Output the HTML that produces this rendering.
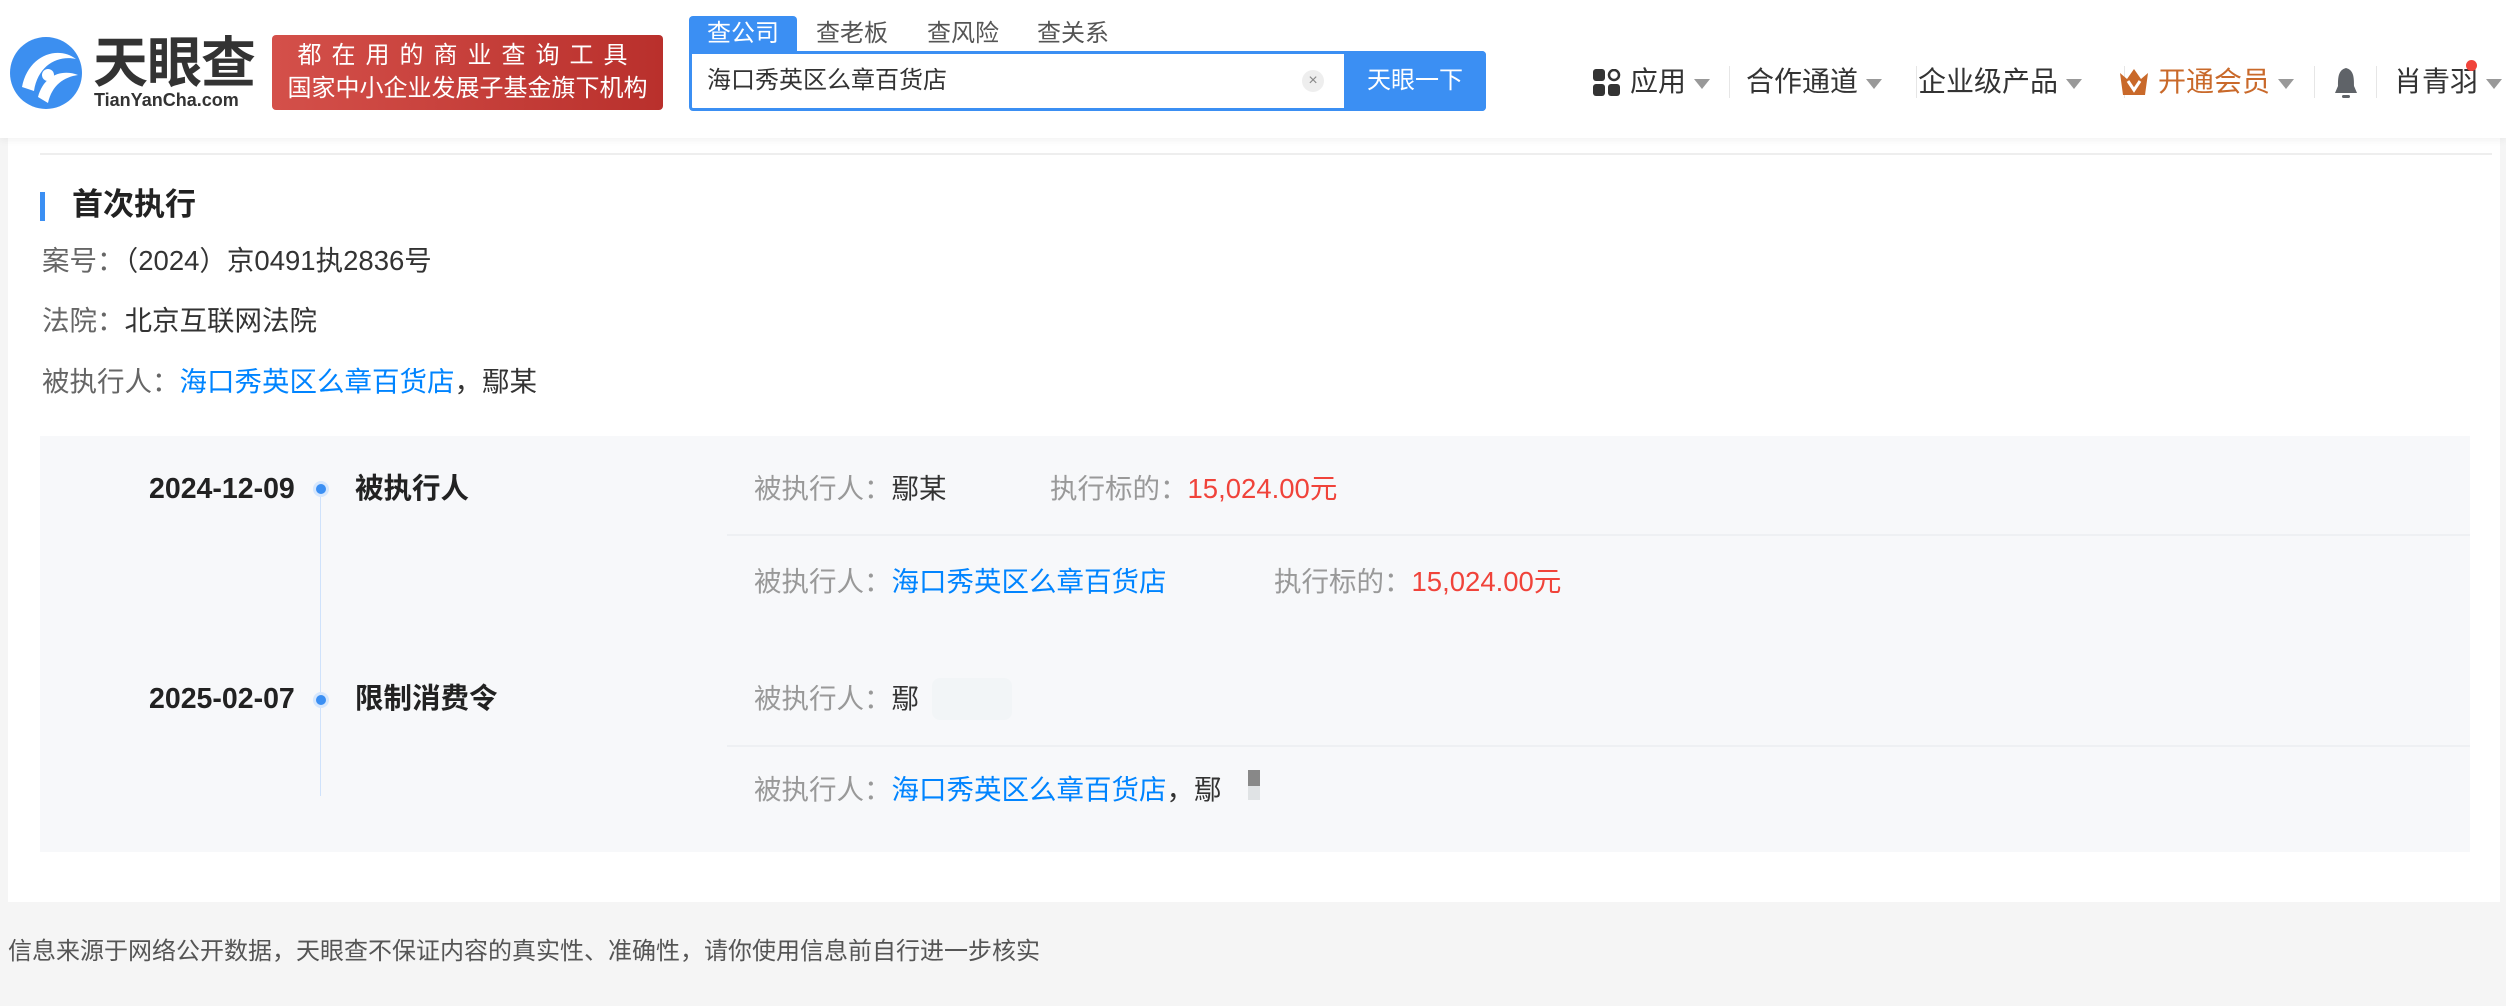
<!DOCTYPE html>
<html><head><meta charset="utf-8"><style>
*{margin:0;padding:0;box-sizing:border-box}
body{width:2506px;height:1006px;background:#f5f5f5;font-family:"Liberation Sans","Noto Sans CJK SC",sans-serif;position:relative;overflow:hidden;color:#333}
.a{position:absolute;white-space:nowrap}
.hdr{position:absolute;left:0;top:0;width:2506px;height:138px;background:#fff;box-shadow:0 2px 8px rgba(0,0,0,.06);z-index:2}
.card{position:absolute;left:8px;top:138px;width:2492px;height:764px;background:#fff}
.g{color:#999}.b{color:#0084ff}.r{color:#f0433a}
.t{font-size:27.5px;line-height:30px}
.d{font-size:28.5px;line-height:30px;font-weight:bold;color:#222}
.nav{font-size:28px;color:#333;top:64px;line-height:36px}
.tri{display:inline-block;width:0;height:0;border-left:8px solid transparent;border-right:8px solid transparent;border-top:10px solid #999;vertical-align:middle;margin-left:8px}
.sep{position:absolute;top:66px;width:1px;height:32px;background:#e6e6e6}
</style></head><body>
<div class="hdr">
 <svg class="a" style="left:8px;top:35px" width="76" height="76" viewBox="0 0 76 76">
  <circle cx="38" cy="38" r="36" fill="#3c8ff0"/>
  <path d="M14 52 C20 20 50 10 68 24 C50 20 30 30 26 56 Z" fill="#fff"/>
  <path d="M30 62 C36 40 54 34 70 40 C56 42 44 50 40 68 Z" fill="#fff"/>
  <circle cx="40" cy="40" r="6" fill="#fff"/>
 </svg>
 <div class="a" style="left:93px;top:33px;font-size:55px;font-weight:bold;color:#333;line-height:60px;letter-spacing:-1px">天眼查</div>
 <div class="a" style="left:94px;top:90px;font-size:18px;color:#333;font-weight:bold;line-height:20px">TianYanCha.com</div>
 <div class="a" style="left:272px;top:35px;width:391px;height:75px;background:linear-gradient(90deg,#d4504a,#b9302c);border-radius:4px;color:#fff;text-align:center;font-size:24px;line-height:33px;padding-top:4px">
  <div style="letter-spacing:10px">都在用的商业查询工具</div><div>国家中小企业发展子基金旗下机构</div></div>
 <div class="a" style="left:689px;top:16px;width:108px;height:36px;background:#3b8ff3;color:#fff;font-size:24px;line-height:36px;text-align:center;border-radius:4px 4px 0 0">查公司</div>
 <div class="a" style="left:816px;top:16px;font-size:24px;line-height:36px;color:#555">查老板</div>
 <div class="a" style="left:927px;top:16px;font-size:24px;line-height:36px;color:#555">查风险</div>
 <div class="a" style="left:1037px;top:16px;font-size:24px;line-height:36px;color:#555">查关系</div>
 <div class="a" style="left:689px;top:51px;width:797px;height:60px;border:3px solid #3b8ff3;border-radius:0 4px 4px 4px;background:#fff"></div>
 <div class="a" style="left:707px;top:64px;font-size:24px;line-height:34px;color:#333">海口秀英区么章百货店</div>
 <div class="a" style="left:1302px;top:70px;width:22px;height:22px;border-radius:50%;background:#eee;color:#888;font-size:16px;line-height:22px;text-align:center">×</div>
 <div class="a" style="left:1344px;top:51px;width:142px;height:60px;background:#3b8ff3;color:#fff;font-size:24px;line-height:60px;text-align:center;border-radius:0 4px 4px 0">天眼一下</div>
 <svg class="a" style="left:1593px;top:69px" width="28" height="28"><rect x="0" y="0" width="12" height="12" rx="3" fill="#333"/><circle cx="21" cy="6" r="5" fill="none" stroke="#333" stroke-width="2.5"/><rect x="0" y="15" width="12" height="12" rx="3" fill="#333"/><rect x="15" y="15" width="12" height="12" rx="3" fill="#333"/></svg>
 <div class="a nav" style="left:1630px">应用<span class="tri"></span></div>
 <div class="sep" style="left:1729px"></div>
 <div class="a nav" style="left:1746px">合作通道<span class="tri"></span></div>
 <div class="sep" style="left:1916px"></div>
 <div class="a nav" style="left:1918px">企业级产品<span class="tri"></span></div>
 <div class="sep" style="left:2124px"></div>
 <svg class="a" style="left:2118px;top:67px" width="32" height="30"><path d="M2 6 L9 12 L16 2 L23 12 L30 6 L27 28 L5 28 Z" fill="#c9692a"/><path d="M10 14 L16 23 L22 14" fill="none" stroke="#fff" stroke-width="3"/></svg>
 <div class="a nav" style="left:2158px;color:#c9692a">开通会员<span class="tri"></span></div>
 <div class="sep" style="left:2314px"></div>
 <svg class="a" style="left:2332px;top:66px" width="28" height="34"><path d="M14 2 C6 4 6 12 6 20 L3 27 L25 27 L22 20 C22 12 22 4 14 2Z" fill="#5f6368"/><rect x="10" y="29" width="8" height="3" rx="1.5" fill="#5f6368"/></svg>
 <div class="sep" style="left:2376px"></div>
 <div class="a nav" style="left:2394px">肖青羽<span class="tri"></span></div>
 <div class="a" style="left:2466px;top:60px;width:11px;height:11px;border-radius:50%;background:#f0433a"></div>
</div>
<div class="card">
 <div class="a" style="left:32px;top:15px;width:2452px;height:2px;background:#eee"></div>
 <div class="a" style="left:32px;top:54px;width:5px;height:29px;background:#3b8ff3"></div>
 <div class="a" style="left:64px;top:49px;font-size:31px;font-weight:bold;color:#222;line-height:36px">首次执行</div>
 <div class="a t" style="left:34px;top:108px"><span style="color:#666">案号：</span>（2024）京0491执2836号</div>
 <div class="a t" style="left:34px;top:168px"><span style="color:#666">法院：</span>北京互联网法院</div>
 <div class="a t" style="left:34px;top:229px"><span style="color:#666">被执行人：</span><span class="b">海口秀英区么章百货店</span>，鄢某</div>
 <div class="a" style="left:32px;top:298px;width:2430px;height:416px;background:#f7f8fa"></div>
 <div class="a" style="left:312px;top:358px;width:1px;height:300px;background:#cfe2fb"></div>
 <div class="a" style="left:305px;top:343px;width:16px;height:16px;border-radius:50%;background:#3b8ff3;border:3px solid #d6e7fd"></div>
 <div class="a" style="left:305px;top:554px;width:16px;height:16px;border-radius:50%;background:#3b8ff3;border:3px solid #d6e7fd"></div>
 <div class="a d" style="left:141px;top:336px">2024-12-09</div>
 <div class="a d" style="left:347px;top:336px">被执行人</div>
 <div class="a d" style="left:141px;top:546px">2025-02-07</div>
 <div class="a d" style="left:347px;top:546px">限制消费令</div>
 <div class="a t" style="left:746px;top:336px"><span class="g">被执行人：</span>鄢某</div>
 <div class="a t" style="left:1042px;top:336px"><span class="g">执行标的：</span><span class="r">15,024.00元</span></div>
 <div class="a" style="left:719px;top:396px;width:1743px;height:2px;background:#eef0f3"></div>
 <div class="a t" style="left:746px;top:429px"><span class="g">被执行人：</span><span class="b">海口秀英区么章百货店</span></div>
 <div class="a t" style="left:1266px;top:429px"><span class="g">执行标的：</span><span class="r">15,024.00元</span></div>
 <div class="a t" style="left:746px;top:546px"><span class="g">被执行人：</span>鄢</div>
 <div class="a" style="left:924px;top:540px;width:80px;height:42px;background:#f2f5f7;border-radius:8px"></div>
 <div class="a" style="left:719px;top:607px;width:1743px;height:2px;background:#eef0f3"></div>
 <div class="a t" style="left:746px;top:637px"><span class="g">被执行人：</span><span class="b">海口秀英区么章百货店</span>，鄢</div>
 <div class="a" style="left:1240px;top:632px;width:12px;height:16px;background:#888"></div>
 <div class="a" style="left:1240px;top:648px;width:12px;height:14px;background:#e0e3e5"></div>
</div>
<div class="a" style="left:8px;top:937px;font-size:24px;line-height:30px;color:#555">信息来源于网络公开数据，天眼查不保证内容的真实性、准确性，请你使用信息前自行进一步核实</div>
</body></html>
